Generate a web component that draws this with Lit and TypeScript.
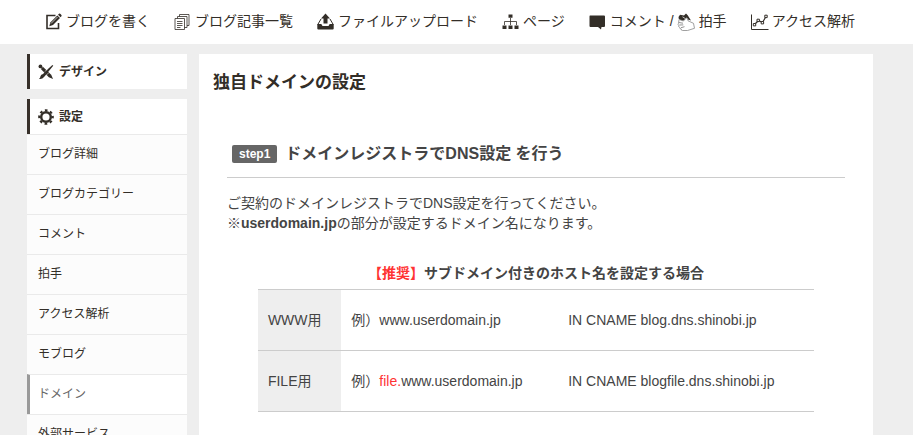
import { LitElement, html, css, svg } from "lit";
import { customElement } from "lit/decorators.js";
import { classMap } from "lit/directives/class-map.js";

const icons = {
  write: svg`<path d="M10.5 2.5H2v13h11.5V10" fill="none" stroke="currentColor" stroke-width="1.6"/><path d="M4.3 13.2l1-3.8 7-7 2.7 2.7-7 7z" fill="currentColor"/><path d="M13 1.700l1-.9q.8-.5 1.500.2l.9.9q.6.7 0 1.400l-.8.9z" fill="currentColor"/><path d="M6 10.500L12.500 4" stroke="#fff" stroke-width=".7"/>`,
  list: svg`<g fill="#fff" stroke="currentColor" stroke-width=".8"><path d="M5.500 1.500h9.500v11H5.500z"/><path d="M3.500 3.500H13v11H3.500z"/><path d="M1 5.500h9.500v11H1z"/><path d="M3 8.500h5.500M3 10.500h5.500M3 12.500h5.500M3 14.500h3.500"/></g>`,
  upload: svg`<path d="M8.500 .5L13 5.500h-2.500v5h-4v-5H4z" fill="currentColor"/><path d="M4 6L.8 11.500M13 6l3.200 5.500" stroke="currentColor"/><path d="M.3 11h4l1.200 2h6l1.200-2h4v4.500q0 1-1 1H1.300q-1 0-1-1z" fill="currentColor"/>`,
  sitemap: svg`<path d="M8.500 5v7M2.500 12V8.500h12V12" fill="none" stroke="currentColor" stroke-width=".8"/><path d="M6.500 1.500h4v3.300h-4zM.5 12.500h4V16h-4zM6.500 12.500h4V16h-4zM12.500 12.500h4V16h-4z" fill="currentColor"/>`,
  comment: svg`<path d="M1 2.500h14q1 0 1 1v9.500q0 1-1 1h-2.500l-.5 2.500L9 14H1.500q-1 0-1-1V3.500q0-1 .5-1z" fill="currentColor"/>`,
  clap: svg`<path d="M.5 4L2 1.800l4 .8L8 .5l1.700 1.800L13 7.500 9 6.300 4 8 .8 6z" fill="currentColor"/><path d="M4.500 3.800L8 6" stroke="#fff" stroke-width=".7"/><path d="M1 6.500L5.500 8 8 5.200q1-.8 1.500.3l.5 2.300 5.500 2.500 1 5-7 2.200H4.700q-1.700 0-1.500-1.500-1.800-.2-1.500-1.700-1.700-.5-1-2-1.300-1-.2-2z" fill="#fff" stroke="#888" stroke-width=".8"/><path d="M1 9.500l4 .7M1.300 12l4-.1M3 14.700l3.500-1" stroke="#777" stroke-width=".8"/>`,
  chart: svg`<path d="M.5 1.500v15H17.500" fill="none" stroke="currentColor"/><path d="M3.500 11.500l4-4 4 2 3.500-6" fill="none" stroke="currentColor" stroke-width="1.200"/><path d="M2.300 10.500h2.400v2.400H2.300zM6 6.200h2.400v2.400H6zM10.200 8.500h2.400v2.400h-2.400zM13.800 2.200h2.400v2.400h-2.400z" fill="#fff" stroke="currentColor"/>`,
  design: svg`<circle cx="2.600" cy="2.600" r="2" fill="currentColor"/><path d="M3 5.200L5.200 3 14 11.500l2 4.500-4.500-2z" fill="currentColor"/><path d="M15.300 1l.9.9L9 10.500 7 8.500z" fill="currentColor"/><path d="M7 9l2 2-2.600 2.700Q4.500 16.400 1 15.700q1.500-1 1.700-3Q3.500 10.800 5 11z" fill="currentColor"/><path d="M9.800 5.500L7.500 8M9.200 11.500l2.200-2.200" stroke="#fff" stroke-width=".7"/>`,
  gear: svg`<circle cx="8.500" cy="8.500" r="5.100" fill="none" stroke="currentColor" stroke-width="2.600"/><circle cx="8.500" cy="8.500" r="7.200" fill="none" stroke="currentColor" stroke-width="2.200" stroke-dasharray="2.830 2.825" stroke-dashoffset="1.415"/>`,
};

type IconName = keyof typeof icons;

const icon = (name: IconName) =>
  html`<svg class="icon" viewBox="0 0 17 17" aria-hidden="true">${icons[name]}</svg>`;

const base = css`
  * {
    box-sizing: border-box;
  }
  a {
    color: inherit;
    text-decoration: none;
  }
  .icon {
    width: 17px;
    height: 17px;
    flex: none;
    overflow: visible;
  }
`;

@customElement("blog-nav")
class BlogNav extends LitElement {
  static styles = [
    base,
    css`
      :host {
        display: block;
        background: #fff;
      }
      .nav {
        display: flex;
        gap: 24px;
        padding: 10px 24px 12px 45px;
        font-size: 14px;
        line-height: 22px;
        white-space: nowrap;
      }
      .item,
      .group {
        display: flex;
        align-items: center;
        gap: 4px;
      }
    `,
  ];

  private link(name: IconName, label: string) {
    return html`<a class="item" href="#">${icon(name)}<span>${label}</span></a>`;
  }

  render() {
    return html`
      <nav class="nav">
        ${this.link("write", "ブログを書く")}
        ${this.link("list", "ブログ記事一覧")}
        ${this.link("upload", "ファイルアップロード")}
        ${this.link("sitemap", "ページ")}
        <div class="group">
          ${this.link("comment", "コメント")}<span>/</span>${this.link("clap", "拍手")}
        </div>
        ${this.link("chart", "アクセス解析")}
      </nav>
    `;
  }
}

@customElement("blog-sidebar")
class BlogSidebar extends LitElement {
  static styles = [
    base,
    css`
      :host {
        display: flex;
        flex-direction: column;
        gap: 10px;
        font-size: 12px;
        line-height: 18px;
      }
      .head {
        display: flex;
        align-items: center;
        height: 35px;
        margin: 0;
        padding-left: 8px;
        border-left: 3px solid #37302a;
        background: #fff;
        font-size: 12px;
        font-weight: bold;
      }
      .head a {
        display: flex;
        align-items: center;
        gap: 5px;
      }
      .head .icon {
        width: 16px;
        height: 16px;
      }
      .list {
        margin: 0;
        padding: 0;
        list-style: none;
      }
      .entry {
        display: block;
        padding: 10px 11px 11px;
        border-top: 1px solid #eaeaea;
        background: #fcfcfc;
      }
      .current {
        padding-left: 8px;
        border-left: 3px solid #999;
        background: #fff;
        color: #666;
      }
    `,
  ];

  private entries = [
    "ブログ詳細",
    "ブログカテゴリー",
    "コメント",
    "拍手",
    "アクセス解析",
    "モブログ",
    "ドメイン",
    "外部サービス",
  ];

  render() {
    return html`
      <h2 class="head"><a href="#">${icon("design")}デザイン</a></h2>
      <section>
        <h2 class="head"><a href="#">${icon("gear")}設定</a></h2>
        <ul class="list">
          ${this.entries.map(
            (label) => html`<li>
              <a class=${classMap({ entry: true, current: label === "ドメイン" })} href="#">${label}</a>
            </li>`
          )}
        </ul>
      </section>
    `;
  }
}

@customElement("domain-settings")
class DomainSettings extends LitElement {
  static styles = [
    base,
    css`
      :host {
        display: block;
        background: #fff;
        color: #444;
        font-size: 14px;
        line-height: 20px;
      }
      .title {
        margin: 0;
        padding: 17px 14px 0;
        color: #332e28;
        font-size: 17px;
        line-height: 24px;
      }
      .body {
        padding: 45px 28px 40px;
      }
      .step {
        display: flex;
        align-items: center;
        gap: 8px;
        margin: 0 0 15px;
        padding: 0 5px 10px;
        border-bottom: 1px solid #ccc;
        font-size: 16px;
        line-height: 27px;
      }
      .badge {
        padding: 0 7px;
        border-radius: 2px;
        background: #666;
        color: #fff;
        font-size: 12px;
        line-height: 18px;
      }
      .text {
        margin: 0;
      }
      .records {
        width: 90%;
        margin: 30px auto 0;
        border-collapse: collapse;
        table-layout: fixed;
      }
      .records caption {
        padding-bottom: 6px;
        font-weight: bold;
      }
      .records th,
      .records td {
        height: 61px;
        padding: 0 10px;
        border-top: 1px solid #ccc;
        border-bottom: 1px solid #ccc;
        font-weight: normal;
        text-align: left;
      }
      .records th {
        width: 15%;
        background: #eee;
      }
      .records .host {
        width: 39%;
      }
      .red {
        color: #f33;
      }
    `,
  ];

  render() {
    return html`
      <h1 class="title">独自ドメインの設定</h1>
      <div class="body">
        <h2 class="step"><span class="badge">step1</span>ドメインレジストラでDNS設定 を行う</h2>
        <p class="text">
          ご契約のドメインレジストラでDNS設定を行ってください。<br />※<b>userdomain.jp</b>の部分が設定するドメイン名になります。
        </p>
        <table class="records">
          <caption><span class="red">【推奨】</span>サブドメイン付きのホスト名を設定する場合</caption>
          <tr>
            <th scope="row">WWW用</th>
            <td class="host">例）www.userdomain.jp</td>
            <td>IN CNAME blog.dns.shinobi.jp</td>
          </tr>
          <tr>
            <th scope="row">FILE用</th>
            <td class="host">例）<span class="red">file.</span>www.userdomain.jp</td>
            <td>IN CNAME blogfile.dns.shinobi.jp</td>
          </tr>
        </table>
      </div>
    `;
  }
}

@customElement("app-root")
class AppRoot extends LitElement {
  static styles = css`
    :host {
      display: block;
      min-height: 100vh;
      background: #eee;
      color: #332e28;
      font-family: "Liberation Sans", "Noto Sans CJK JP", sans-serif;
    }
    .layout {
      display: grid;
      grid-template-columns: 160px minmax(0, 1fr);
      gap: 12px;
      padding: 10px 40px 0 27px;
    }
  `;

  render() {
    return html`
      <blog-nav></blog-nav>
      <div class="layout">
        <blog-sidebar></blog-sidebar>
        <domain-settings></domain-settings>
      </div>
    `;
  }
}
